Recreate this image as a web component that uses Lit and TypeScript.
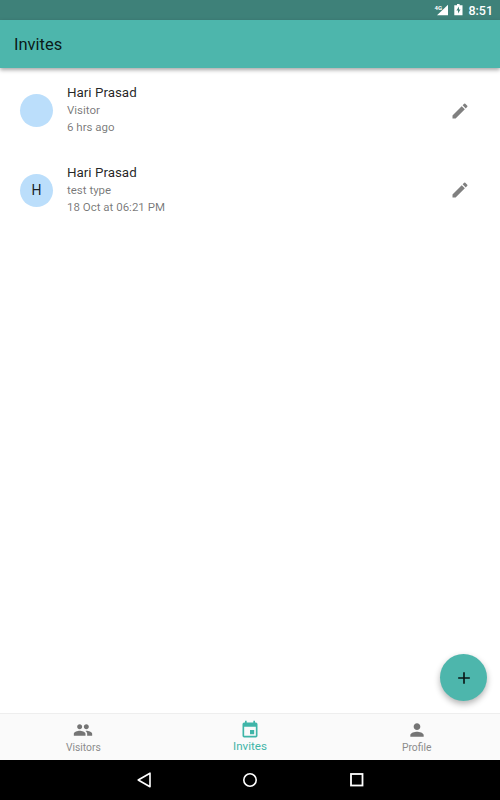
import { LitElement, html, css, svg } from 'lit';
import { customElement } from 'lit/decorators.js';

const invites = [
  { name: 'Hari Prasad', initial: '', type: 'Visitor', time: '6 hrs ago' },
  { name: 'Hari Prasad', initial: 'H', type: 'test type', time: '18 Oct at 06:21 PM' },
];

const icon = (d: unknown, size = 24) =>
  html`<svg width=${size} height=${size} viewBox="0 0 24 24" fill="currentColor">${d}</svg>`;

const pencil = svg`<path d="M3 17.25V21h3.75L17.81 9.94l-3.75-3.75L3 17.25zM20.71 7.04a1 1 0 0 0 0-1.41l-2.34-2.34a1 1 0 0 0-1.41 0l-1.83 1.83 3.75 3.75 1.83-1.83z"/>`;
const people = svg`<path d="M16 11c1.66 0 2.99-1.34 2.99-3S17.66 5 16 5s-3 1.34-3 3 1.34 3 3 3zm-8 0c1.66 0 2.99-1.34 2.99-3S9.66 5 8 5 5 6.34 5 8s1.34 3 3 3zm0 2c-2.33 0-7 1.17-7 3.5V19h14v-2.5C15 14.17 10.33 13 8 13zm8 0c-.29 0-.62.02-.97.05C16.19 13.89 17 15.02 17 16.5V19h6v-2.5c0-2.33-4.67-3.5-7-3.5z"/>`;
const calendar = svg`<path d="M17 12h-5v5h5v-5zM16 1v2H8V1H6v2H5a2 2 0 0 0-2 2v14a2 2 0 0 0 2 2h14a2 2 0 0 0 2-2V5a2 2 0 0 0-2-2h-1V1h-2zm3 18H5V8h14v11z"/>`;
const person = svg`<path d="M12 12c2.21 0 4-1.79 4-4s-1.79-4-4-4-4 1.79-4 4 1.79 4 4 4zm0 2c-2.67 0-8 1.34-8 4v2h16v-2c0-2.66-5.33-4-8-4z"/>`;

@customElement('app-root')
export class AppRoot extends LitElement {
  static styles = css`
    :host {
      display: flex;
      flex-direction: column;
      width: 500px;
      height: 800px;
      font-family: Roboto, 'Liberation Sans', sans-serif;
      background: #fff;
      overflow: hidden;
    }
    .status {
      height: 20px;
      background: #3e8179;
      color: #fff;
      display: flex;
      align-items: center;
      justify-content: flex-end;
      padding-right: 7px;
      flex: none;
    }
    .status .clock {
      font-size: 12.5px;
      font-weight: 500;
      margin-left: 5px;
    }
    .status svg { display: block; }
    .signal { margin-right: 6px; }
    .toolbar {
      height: 48px;
      flex: none;
      background: #4db6ac;
      color: rgba(0, 0, 0, 0.87);
      font-size: 16.5px;
      font-weight: 400;
      display: flex;
      align-items: center;
      padding-left: 14px;
      box-shadow: 0 2px 4px rgba(0, 0, 0, 0.35);
      z-index: 1;
    }
    .list {
      flex: 1;
      padding-top: 3px;
      position: relative;
    }
    .row {
      height: 79.5px;
      display: flex;
      align-items: center;
      padding: 0 30px 0 20px;
    }
    .avatar {
      width: 33px;
      height: 33px;
      border-radius: 50%;
      background: #bbdefb;
      color: rgba(0, 0, 0, 0.87);
      font-size: 14px;
      display: flex;
      align-items: center;
      justify-content: center;
      flex: none;
    }
    .text {
      flex: 1;
      margin: 0 0 3.5px 14px;
      display: flex;
      flex-direction: column;
      gap: 3px;
    }
    .name {
      font-size: 13.4px;
      line-height: 17px;
      color: rgba(0, 0, 0, 0.87);
      margin-bottom: -1px;
    }
    .sub {
      font-size: 11.5px;
      line-height: 14px;
      color: rgba(0, 0, 0, 0.54);
    }
    .edit {
      color: #808080;
      display: flex;
    }
    .fab {
      position: absolute;
      right: 13px;
      bottom: 12px;
      width: 47px;
      height: 47px;
      border-radius: 50%;
      background: #4db6ac;
      color: rgba(0, 0, 0, 0.87);
      display: flex;
      align-items: center;
      justify-content: center;
      box-shadow: 0 3px 6px rgba(0, 0, 0, 0.3);
    }
    .nav {
      height: 46px;
      flex: none;
      background: #fafafa;
      border-top: 1px solid #eeeeee;
      display: grid;
      grid-template-columns: repeat(3, 1fr);
    }
    .tab {
      display: flex;
      flex-direction: column;
      align-items: center;
      padding-top: 6px;
      color: #757575;
      font-size: 10.3px;
      line-height: 12px;
    }
    .tab span { color: #8c8c8c; margin-top: 2px; }
    .tab.on {
      color: #3fb5a8;
      font-size: 11.6px;
    }
    .tab.on span { color: #3fb5a8; margin-top: 0; }
    .sysnav {
      height: 40px;
      flex: none;
      background: #000;
      display: flex;
      align-items: center;
      justify-content: center;
      gap: 92px;
      padding-left: 1px;
    }
    .sysnav svg { display: block; }
    .sysnav .recent { margin-left: 1px; }
  `;

  render() {
    return html`
      <div class="status">
        <svg class="signal" width="14" height="14" viewBox="0 0 14 14">
          <path d="M14 1.7V12.3H3z" fill="#fff" />
          <text x="0.5" y="6.8" font-size="6" font-weight="700" fill="#fff" font-family="Roboto">4G</text>
        </svg>
        <svg width="9" height="14" viewBox="0 0 9 14">
          <path d="M3 1h2.6v1.3h2.9V12.3H0.3V2.3H3z" fill="#fff" />
          <path d="M5 3.6 2.4 7.6H4v3l2.5-4.2H5z" fill="#3e8179" />
        </svg>
        <span class="clock">8:51</span>
      </div>
      <div class="toolbar">Invites</div>
      <div class="list">
        ${invites.map(
          (i) => html`
            <div class="row">
              <div class="avatar">${i.initial}</div>
              <div class="text">
                <div class="name">${i.name}</div>
                <div class="sub">${i.type}</div>
                <div class="sub">${i.time}</div>
              </div>
              <div class="edit">${icon(pencil, 20)}</div>
            </div>
          `
        )}
        <div class="fab">${icon(svg`<path d="M19 13h-6v6h-2v-6H5v-2h6V5h2v6h6v2z"/>`, 20)}</div>
      </div>
      <div class="nav">
        <div class="tab">${icon(people, 20)}<span>Visitors</span></div>
        <div class="tab on">${icon(calendar, 20)}<span>Invites</span></div>
        <div class="tab">${icon(person, 20)}<span>Profile</span></div>
      </div>
      <div class="sysnav">
        <svg width="14" height="16" viewBox="0 0 14 16">
          <path d="M13 1.2v13.6L1.2 8z" fill="none" stroke="#fff" stroke-width="1.6" stroke-linejoin="round" />
        </svg>
        <svg width="14" height="14" viewBox="0 0 14 14">
          <circle cx="7" cy="7" r="6.2" fill="none" stroke="#fff" stroke-width="1.6" />
        </svg>
        <svg class="recent" width="14" height="14" viewBox="0 0 14 14">
          <rect x="1" y="1" width="11.5" height="11.5" fill="none" stroke="#fff" stroke-width="1.8" />
        </svg>
      </div>
    `;
  }
}
